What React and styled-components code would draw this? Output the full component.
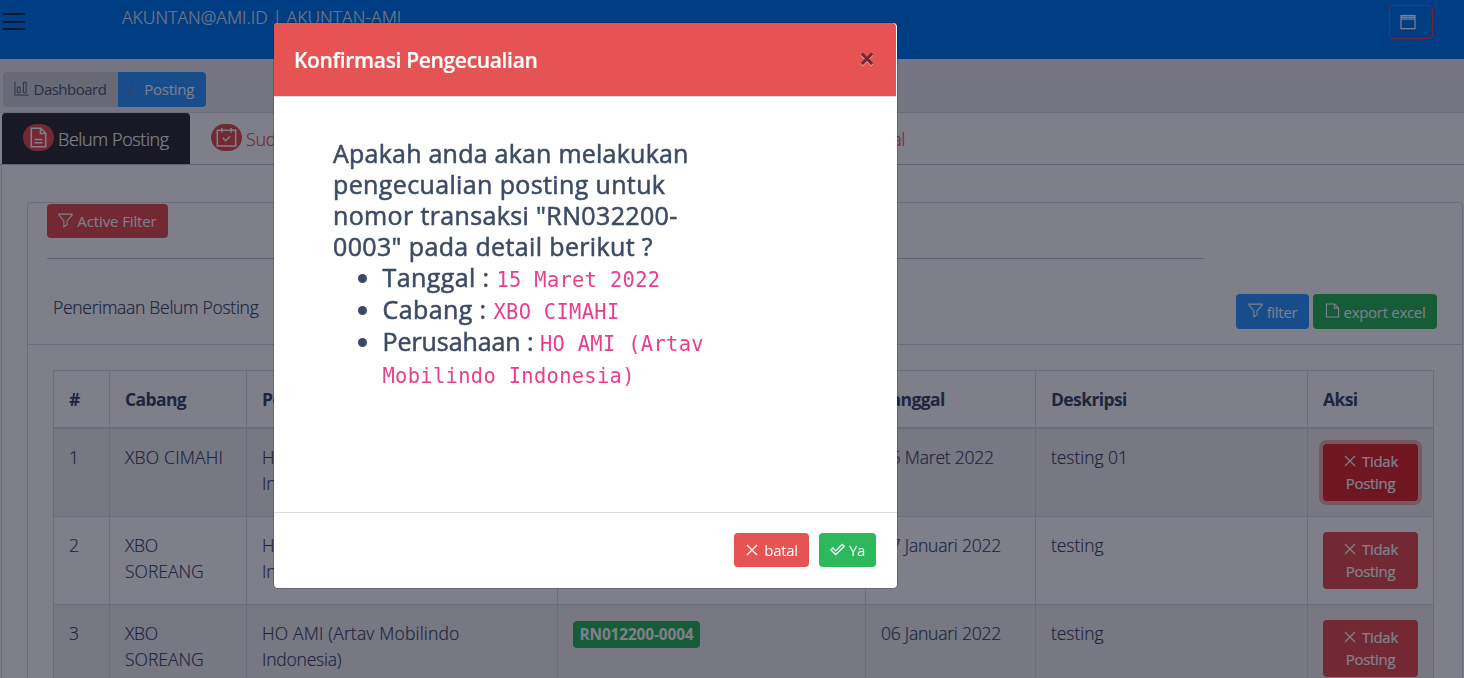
import React from "react";
import styled, { createGlobalStyle, css } from "styled-components";

const GlobalStyle = createGlobalStyle`
  *, *::before, *::after { box-sizing: border-box; }
  html, body { margin: 0; height: 678px; overflow: hidden; background: #ebedef; }
  body {
    font-family: "Open Sans", "Noto Sans", sans-serif;
    font-size: 17.5px;
    line-height: 26px;
    color: #3c4b64;
  }
`;

const Page = styled.div`
  height: 678px;
  overflow: hidden;
`;

const lightText = css`
  font-weight: 300;
  -webkit-text-stroke: 0.2px currentColor;
`;

/* ---------- icons ---------- */

const IconSvg = styled.svg`
  display: inline-block;
  flex: none;
  width: ${(p) => p.$size}px;
  height: ${(p) => p.$size}px;
  margin-top: ${(p) => -(p.$lift || 0)}px;
  fill: none;
  stroke: currentColor;
  stroke-width: ${(p) => p.$stroke || 38};
`;

const paths = {
  chart: "M32 16V480H496M112 208H208V400H112ZM320 48H416V400H320Z",
  description: "M80 32H312L432 152V480H80ZM304 32V160H432M160 304H352M160 384H352",
  calendar: "M32 80H480V464H32ZM144 24V136M368 24V136M168 264L238 334L346 226",
  filter: "M32 40H480V72L312 272V400L200 472V272L32 72Z",
  file: "M48 32H328L464 168V480H48ZM320 32V176H464",
  close: "M72 72L440 440M440 72L72 440",
  check: "M30 274L98 206L196 304L420 80L486 146L196 428Z",
  window: "M32 48H480V464H32ZM32 160H480M32 104H480",
};

const Icon = ({ name, size = 16, stroke, lift }) => (
  <IconSvg viewBox="0 0 512 512" $size={size} $stroke={stroke} $lift={lift} aria-hidden="true">
    <path d={paths[name]} />
  </IconSvg>
);

/* ---------- buttons ---------- */

const tones = {
  danger: "#e55353",
  info: "#3399ff",
  success: "#2eb85c",
};

const Button = styled.button`
  display: inline-flex;
  align-items: center;
  justify-content: center;
  gap: ${(p) => p.$gap ?? 4}px;
  width: ${(p) => p.$width}px;
  height: ${(p) => p.$height || 34}px;
  padding: 0;
  border: 0;
  border-radius: 4px;
  background: ${(p) => tones[p.$tone]};
  color: #fff;
  font: 400 15px/22px "Open Sans", sans-serif;
  letter-spacing: ${(p) => p.$spacing ?? -0.3}px;
  white-space: nowrap;
`;

const RowButton = styled.button`
  display: block;
  width: 95px;
  height: 57px;
  padding: 6px 10px 7px 10px;
  border: 0;
  border-radius: 4px;
  background: #e55353;
  color: #fff;
  font: 400 15px/22px "Open Sans", sans-serif;
  letter-spacing: -0.3px;
  ${(p) =>
    p.$focused &&
    css`
      background: #e02d2d;
      box-shadow: 0 0 0 4px rgba(233, 109, 109, 0.5);
    `}
`;

const RowButtonLine = styled.span`
  display: flex;
  justify-content: center;
  align-items: center;
  gap: 5px;
`;

/* ---------- top bars ---------- */

const Header = styled.header`
  display: flex;
  justify-content: space-between;
  height: 59px;
  background: #007aee;
`;

const HeaderLeft = styled.div`
  display: flex;
  gap: 97px;
  padding-left: 3px;
`;

const Burger = styled.div`
  display: flex;
  flex-direction: column;
  gap: 5.3px;
  width: 22px;
  padding-top: 13.4px;
`;

const BurgerLine = styled.span`
  height: 2px;
  border-radius: 1px;
  background: #00305f;
`;

const UserName = styled.span`
  padding-top: 4px;
  color: #ebedef;
  ${lightText}
  letter-spacing: 0.08px;
  white-space: nowrap;
`;

const WindowButton = styled.button`
  display: flex;
  align-items: center;
  width: 44px;
  height: 34px;
  margin: 5px 31px 0 0;
  padding: 0 0 0 10px;
  border: 1px solid #e55353;
  border-radius: 4px;
  background: transparent;
  color: #fff;
`;

const SubHeader = styled.nav`
  display: flex;
  height: 54px;
  padding: 13px 0 0 3px;
  border-bottom: 1px solid #d8dbe0;
  background: #ebedef;
`;

const Crumb = styled.span`
  display: flex;
  align-items: center;
  gap: ${(p) => p.$gap}px;
  width: ${(p) => p.$width}px;
  height: 35px;
  padding: 0 0 2px ${(p) => p.$pad}px;
  border-radius: ${(p) => (p.$active ? "0 4px 4px 0" : "4px 0 0 4px")};
  background: ${(p) => (p.$active ? "#3399ff" : "#ced2d8")};
  color: ${(p) => (p.$active ? "#fff" : "#4f5d73")};
  font-size: 15px;
  letter-spacing: ${(p) => (p.$active ? -0.25 : -0.5)}px;
`;

const Slash = styled.span`
  color: #768192;
`;

/* ---------- tabs ---------- */

const Main = styled.main`
  height: 565px;
  background: #fff;
`;

const Tabs = styled.div`
  display: flex;
  height: 52px;
  padding-left: 2px;
  border-bottom: 1px solid #c4c9d0;
`;

const Tab = styled.div`
  display: flex;
  align-items: center;
  gap: 4px;
  width: ${(p) => p.$width}px;
  height: 51px;
  padding: 1px 21px 0 21px;
  border-radius: 4px 4px 0 0;
  justify-content: ${(p) => (p.$end ? "flex-end" : "flex-start")};
  background: ${(p) => (p.$active ? "#333335" : "transparent")};
  color: ${(p) => (p.$active ? "#fff" : "#e55353")};
  font-size: 18px;
  ${lightText}
  letter-spacing: -0.4px;
  white-space: nowrap;
`;

const TabBadge = styled.span`
  display: flex;
  flex: none;
  align-items: center;
  justify-content: center;
  width: 31px;
  height: 27px;
  margin-bottom: 3px;
  border-radius: 14px;
  background: #e55353;
  color: #fff;
`;

/* ---------- card ---------- */

const TabPane = styled.div`
  height: 513px;
  margin-left: 1px;
  padding: 37px 1px 0 25px;
  border-left: 1px solid #d8dbe0;
`;

const Card = styled.section`
  height: 500px;
  border: 1px solid #d8dbe0;
  border-radius: 4px 4px 0 0;
`;

const CardHeader = styled.div`
  height: 142px;
  padding: 1px 25px 0 19px;
  border-bottom: 1px solid #d8dbe0;
`;

const Rule = styled.div`
  width: 1157px;
  height: 1px;
  margin-top: 20px;
  background: #c4c6cc;
`;

const TitleRow = styled.div`
  display: flex;
  justify-content: space-between;
  align-items: flex-start;
  margin-top: 35px;
`;

const FilterLine = styled.div`
  display: flex;
  height: 34px;
`;

const CardTitle = styled.span`
  padding: 0 0 0 6px;
  ${lightText}
  letter-spacing: -0.28px;
`;

const Actions = styled.div`
  display: flex;
  gap: 4px;
`;

/* ---------- table ---------- */

const Table = styled.div`
  width: 1381px;
  margin: 25px 0 0 25px;
  border-top: 1px solid #d8dbe0;
  border-right: 1px solid #d8dbe0;
`;

const Row = styled.div`
  display: grid;
  grid-template-columns: 56px 137px 311px 308px 170px 272px 126px;
  height: ${(p) => (p.$head ? 58 : 88)}px;
  border-bottom: ${(p) => (p.$head ? 2 : 1)}px solid #d8dbe0;
  background: ${(p) => (p.$striped ? "rgba(0, 0, 21, 0.06)" : "transparent")};
`;

const Cell = styled.div`
  padding: 15px 14px 0 15px;
  border-left: 1px solid #d8dbe0;
  ${lightText}
  ${(p) =>
    p.$bold &&
    css`
      font-weight: 700;
      letter-spacing: -0.6px;
      -webkit-text-stroke: 0;
    `}
`;

const Line = styled.div`
  letter-spacing: ${(p) => p.$spacing}px;
  white-space: nowrap;
`;

const Badge = styled.span`
  display: block;
  width: 127px;
  height: 27px;
  margin-top: 1px;
  border-radius: 4px;
  background: #2eb85c;
  color: #fff;
  font-size: 15.4px;
  font-weight: 700;
  line-height: 27px;
  text-align: center;
  letter-spacing: -0.12px;
  -webkit-text-stroke: 0;
`;

/* ---------- modal ---------- */

const Backdrop = styled.div`
  position: fixed;
  inset: 0;
  display: flex;
  align-items: flex-start;
  padding: 23px 0 0 274px;
  background: rgba(0, 0, 21, 0.5);
`;

const Dialog = styled.div`
  display: flex;
  flex-direction: column;
  width: 623px;
  height: 565px;
  border-radius: 4px;
  background: #fff;
  box-shadow: 0 0 0 1px rgba(0, 0, 21, 0.2);
`;

const DialogHeader = styled.div`
  display: flex;
  align-items: center;
  justify-content: space-between;
  width: 622px;
  height: 74px;
  padding: 0 21px 0 20px;
  border-bottom: 1px solid #d8dbe0;
  border-radius: 4px 4px 0 0;
  background: #e55353;
  background-clip: padding-box;
`;

const DialogTitle = styled.h5`
  margin: 0;
  color: #fff;
  font-size: 21px;
  font-weight: 600;
  letter-spacing: -0.33px;
  -webkit-text-stroke: 0.2px currentColor;
`;

const CloseGlyph = styled.span`
  width: 16px;
  margin-top: -4px;
  color: #000015;
  font-size: 28px;
  font-weight: 700;
  text-align: center;
  text-shadow: 0 1px 0 #fff;
  opacity: 0.5;
`;

const DialogBody = styled.div`
  flex: 1;
  padding: 41px 0 0 59px;
  font-size: 25px;
  font-weight: 400;
  line-height: 31px;
  -webkit-text-stroke: 0.55px currentColor;
`;

const Question = styled.div`
  letter-spacing: ${(p) => p.$spacing}px;
  white-space: nowrap;
`;

const List = styled.ul`
  margin: -1px 0 0;
  padding-left: 49.5px;
  list-style: none;
`;

const Item = styled.li`
  display: flex;
  line-height: 32px;
  white-space: nowrap;
`;

const ItemLine = styled.div`
  height: 32px;
  letter-spacing: ${(p) => p.$spacing || 0}px;
`;

const Bullet = styled.span`
  width: 9px;
  height: 9px;
  margin: 13px 16px 0 -25px;
  border-radius: 50%;
  background: currentColor;
`;

const Code = styled.code`
  color: #e83e8c;
  font-family: "DejaVu Sans Mono", monospace;
  font-size: 20.4px;
  font-weight: 400;
  line-height: 1;
  letter-spacing: 0.34px;
  -webkit-text-stroke: 0;
`;

const DialogFooter = styled.div`
  display: flex;
  justify-content: flex-end;
  gap: 10px;
  height: 76px;
  padding: 20px 21px 0 0;
  border-top: 1px solid #d8dbe0;
`;

const cimahi = [{ text: "XBO CIMAHI", spacing: 0.2 }];
const soreang = [
  { text: "XBO", spacing: -0.3 },
  { text: "SOREANG", spacing: 0 },
];

const rows = [
  { no: "1", branch: cimahi, code: "RN032200-0003", date: "15 Maret 2022", note: "testing 01" },
  { no: "2", branch: soreang, code: "RN012200-0005", date: "07 Januari 2022", note: "testing" },
  { no: "3", branch: soreang, code: "RN012200-0004", date: "06 Januari 2022", note: "testing" },
];

const question = [
  { text: "Apakah anda akan melakukan", spacing: 0.23 },
  { text: "pengecualian posting untuk", spacing: 0.37 },
  { text: 'nomor transaksi "RN032200-', spacing: 0.36 },
  { text: '0003" pada detail berikut ?', spacing: 0.36 },
];

const details = [
  { label: "Tanggal :", spacing: 0.4, value: ["15 Maret 2022"] },
  { label: "Cabang :", spacing: 0.4, value: ["XBO CIMAHI"] },
  { label: "Perusahaan :", spacing: -0.08, value: ["HO AMI (Artav", "Mobilindo Indonesia)"] },
];

export default function App() {
  return (
    <Page>
      <GlobalStyle />
      <Header>
        <HeaderLeft>
          <Burger>
            <BurgerLine />
            <BurgerLine />
            <BurgerLine />
          </Burger>
          <UserName>AKUNTAN@AMI.ID | AKUNTAN-AMI</UserName>
        </HeaderLeft>
        <WindowButton>
          <Icon name="window" size={16} stroke={40} />
        </WindowButton>
      </Header>
      <SubHeader>
        <Crumb $width={115} $pad={11} $gap={4.5}>
          <Icon name="chart" size={15} stroke={32} />
          Dashboard
        </Crumb>
        <Crumb $active $width={88} $pad={11} $gap={10}>
          <Slash>/</Slash>
          Posting
        </Crumb>
      </SubHeader>
      <Main>
        <Tabs>
          <Tab $active $width={188}>
            <TabBadge>
              <Icon name="description" size={21} />
            </TabBadge>
            Belum Posting
          </Tab>
          <Tab $width={190}>
            <TabBadge>
              <Icon name="calendar" size={21} />
            </TabBadge>
            Sudah Posting
          </Tab>
          <Tab $end $width={546}>
            Batal
          </Tab>
        </Tabs>
        <TabPane>
          <Card>
            <CardHeader>
              <FilterLine>
                <Button $tone="danger" $width={121} $spacing={-0.12}>
                  <Icon name="filter" size={15} lift={2} />
                  Active Filter
                </Button>
              </FilterLine>
              <Rule />
              <TitleRow>
                <CardTitle>Penerimaan Belum Posting</CardTitle>
                <Actions>
                  <Button $tone="info" $width={73} $height={35}>
                    <Icon name="filter" size={15} lift={2} />
                    filter
                  </Button>
                  <Button $tone="success" $width={124} $height={35}>
                    <Icon name="file" size={15} lift={2} />
                    export excel
                  </Button>
                </Actions>
              </TitleRow>
            </CardHeader>
            <Table>
              <Row $head>
                {["#", "Cabang", "Perusahaan", "Nomor Transaksi", "Tanggal", "Deskripsi", "Aksi"].map((h) => (
                  <Cell $bold key={h}>
                    {h}
                  </Cell>
                ))}
              </Row>
              {rows.map((r, i) => (
                <Row key={r.no} $striped={i % 2 === 0}>
                  <Cell>{r.no}</Cell>
                  <Cell>
                    {r.branch.map((b) => (
                      <Line key={b.text} $spacing={b.spacing}>
                        {b.text}
                      </Line>
                    ))}
                  </Cell>
                  <Cell>
                    <Line $spacing={0.17}>HO AMI (Artav Mobilindo</Line>
                    <Line $spacing={-0.22}>Indonesia)</Line>
                  </Cell>
                  <Cell>
                    <Badge>{r.code}</Badge>
                  </Cell>
                  <Cell>
                    <Line $spacing={-0.22}>{r.date}</Line>
                  </Cell>
                  <Cell>
                    <Line $spacing={-0.05}>{r.note}</Line>
                  </Cell>
                  <Cell>
                    <RowButton $focused={i === 0}>
                      <RowButtonLine>
                        <Icon name="close" size={14} stroke={44} />
                        Tidak
                      </RowButtonLine>
                      <RowButtonLine>Posting</RowButtonLine>
                    </RowButton>
                  </Cell>
                </Row>
              ))}
            </Table>
          </Card>
        </TabPane>
      </Main>
      <Backdrop>
        <Dialog role="dialog">
          <DialogHeader>
            <DialogTitle>Konfirmasi Pengecualian</DialogTitle>
            <CloseGlyph>×</CloseGlyph>
          </DialogHeader>
          <DialogBody>
            {question.map((q) => (
              <Question key={q.text} $spacing={q.spacing}>
                {q.text}
              </Question>
            ))}
            <List>
              {details.map((d) => (
                <Item key={d.label}>
                  <Bullet />
                  <div>
                    <ItemLine $spacing={d.spacing}>
                      {d.label} <Code>{d.value[0]}</Code>
                    </ItemLine>
                    {d.value[1] && (
                      <ItemLine>
                        <Code>{d.value[1]}</Code>
                      </ItemLine>
                    )}
                  </div>
                </Item>
              ))}
            </List>
          </DialogBody>
          <DialogFooter>
            <Button $tone="danger" $width={75} $gap={5}>
              <Icon name="close" size={14} stroke={44} lift={1} />
              batal
            </Button>
            <Button $tone="success" $width={57}>
              <Icon name="check" size={15} stroke={44} lift={1} />
              Ya
            </Button>
          </DialogFooter>
        </Dialog>
      </Backdrop>
    </Page>
  );
}
